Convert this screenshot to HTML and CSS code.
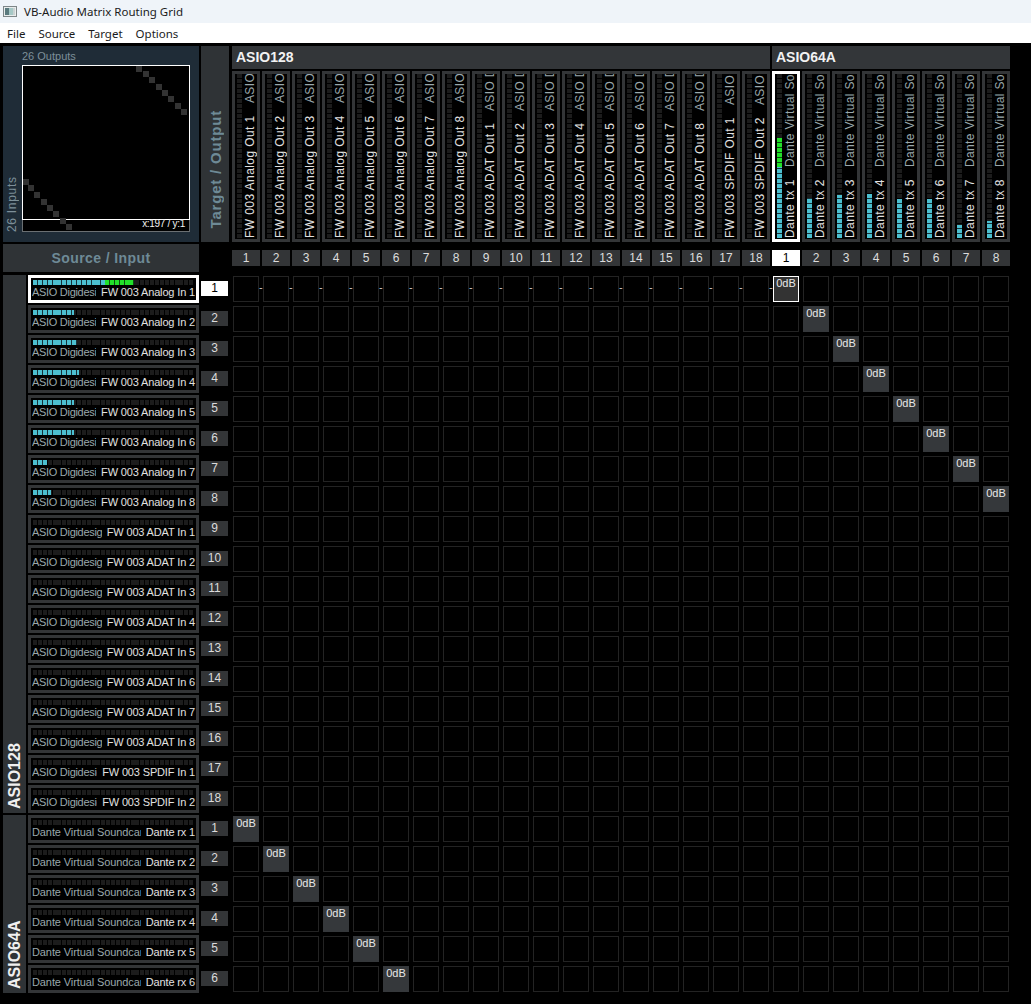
FILE: index.html
```html
<!DOCTYPE html>
<html lang="en">
<head>
<meta charset="utf-8">
<title>VB-Audio Matrix Routing Grid</title>
<link rel="stylesheet" href="styles.css">
</head>
<body>
<header class="titlebar">
<svg class="appicon" width="14" height="11" viewBox="0 0 14 11"><rect x="0.5" y="0.5" width="13" height="10" fill="#e8ecec" stroke="#7d8688"/><rect x="2" y="2" width="4" height="7" fill="#5a7a7e"/><rect x="6" y="2" width="4" height="7" fill="#a5c8c6"/><rect x="10" y="2" width="2" height="7" fill="#c9d2d2"/></svg>
<span>VB-Audio Matrix Routing Grid</span>
</header>
<nav class="menubar"><span>File</span><span>Source</span><span>Target</span><span>Options</span></nav>
<main class="app">
<section class="top">
<div class="overview">
<div class="ov-out">26 Outputs</div>
<div class="ov-in">26 Inputs</div>
<div class="ov-map">
<svg width="168" height="167" viewBox="0 0 168 167">
<rect x="0.5" y="0.5" width="167" height="166" fill="#000" stroke="#6a6f72"/>
<rect x="0.5" y="0.5" width="167" height="154" fill="none" stroke="#fff"/>
<g fill="#333">
<rect x="114" y="1" width="6" height="6"/><rect x="121" y="6" width="6" height="6"/><rect x="127" y="12" width="6" height="6"/><rect x="134" y="19" width="6" height="6"/><rect x="140" y="25" width="6" height="6"/><rect x="146" y="31" width="6" height="6"/><rect x="153" y="38" width="6" height="6"/><rect x="159" y="44" width="6" height="6"/>
<rect x="1" y="114" width="6" height="6"/><rect x="6" y="120" width="6" height="6"/><rect x="12" y="127" width="6" height="6"/><rect x="19" y="134" width="6" height="6"/><rect x="25" y="140" width="6" height="6"/><rect x="31" y="146" width="6" height="6"/><rect x="38" y="153" width="6" height="6"/><rect x="44" y="159" width="6" height="6"/>
</g>
</svg>
<span class="ov-pos">x:197 / y:1</span>
</div>
</div>
<div class="target-label"><span>Target / Output</span></div>
<div class="outputs">
<div class="group-head g128">ASIO128</div>
<div class="group-head g64">ASIO64A</div>
<div class="col"><div class="vm"></div><div class="vt"><span class="ch">FW 003 Analog Out 1</span><span class="src">ASIO Digidesign</span></div></div>
<div class="col"><div class="vm"></div><div class="vt"><span class="ch">FW 003 Analog Out 2</span><span class="src">ASIO Digidesign</span></div></div>
<div class="col"><div class="vm"></div><div class="vt"><span class="ch">FW 003 Analog Out 3</span><span class="src">ASIO Digidesign</span></div></div>
<div class="col"><div class="vm"></div><div class="vt"><span class="ch">FW 003 Analog Out 4</span><span class="src">ASIO Digidesign</span></div></div>
<div class="col"><div class="vm"></div><div class="vt"><span class="ch">FW 003 Analog Out 5</span><span class="src">ASIO Digidesign</span></div></div>
<div class="col"><div class="vm"></div><div class="vt"><span class="ch">FW 003 Analog Out 6</span><span class="src">ASIO Digidesign</span></div></div>
<div class="col"><div class="vm"></div><div class="vt"><span class="ch">FW 003 Analog Out 7</span><span class="src">ASIO Digidesign</span></div></div>
<div class="col"><div class="vm"></div><div class="vt"><span class="ch">FW 003 Analog Out 8</span><span class="src">ASIO Digidesign</span></div></div>
<div class="col"><div class="vm"></div><div class="vt"><span class="ch">FW 003 ADAT Out 1</span><span class="src">ASIO Digidesign</span></div></div>
<div class="col"><div class="vm"></div><div class="vt"><span class="ch">FW 003 ADAT Out 2</span><span class="src">ASIO Digidesign</span></div></div>
<div class="col"><div class="vm"></div><div class="vt"><span class="ch">FW 003 ADAT Out 3</span><span class="src">ASIO Digidesign</span></div></div>
<div class="col"><div class="vm"></div><div class="vt"><span class="ch">FW 003 ADAT Out 4</span><span class="src">ASIO Digidesign</span></div></div>
<div class="col"><div class="vm"></div><div class="vt"><span class="ch">FW 003 ADAT Out 5</span><span class="src">ASIO Digidesign</span></div></div>
<div class="col"><div class="vm"></div><div class="vt"><span class="ch">FW 003 ADAT Out 6</span><span class="src">ASIO Digidesign</span></div></div>
<div class="col"><div class="vm"></div><div class="vt"><span class="ch">FW 003 ADAT Out 7</span><span class="src">ASIO Digidesign</span></div></div>
<div class="col"><div class="vm"></div><div class="vt"><span class="ch">FW 003 ADAT Out 8</span><span class="src">ASIO Digidesign</span></div></div>
<div class="col"><div class="vm"></div><div class="vt"><span class="ch">FW 003 SPDIF Out 1</span><span class="src">ASIO Digidesign</span></div></div>
<div class="col"><div class="vm"></div><div class="vt"><span class="ch">FW 003 SPDIF Out 2</span><span class="src">ASIO Digidesign</span></div></div>
<div class="col sel"><div class="vm"><i class="c" style="height:71px"></i><i class="l" style="height:29px"></i></div><div class="vt"><span class="ch">Dante tx 1</span><span class="src">Dante Virtual Soundcard</span></div></div>
<div class="col"><div class="vm"><i class="c" style="height:40px"></i></div><div class="vt"><span class="ch">Dante tx 2</span><span class="src">Dante Virtual Soundcard</span></div></div>
<div class="col"><div class="vm"><i class="c" style="height:43px"></i></div><div class="vt"><span class="ch">Dante tx 3</span><span class="src">Dante Virtual Soundcard</span></div></div>
<div class="col"><div class="vm"><i class="c" style="height:44px"></i></div><div class="vt"><span class="ch">Dante tx 4</span><span class="src">Dante Virtual Soundcard</span></div></div>
<div class="col"><div class="vm"><i class="c" style="height:39px"></i></div><div class="vt"><span class="ch">Dante tx 5</span><span class="src">Dante Virtual Soundcard</span></div></div>
<div class="col"><div class="vm"><i class="c" style="height:39px"></i></div><div class="vt"><span class="ch">Dante tx 6</span><span class="src">Dante Virtual Soundcard</span></div></div>
<div class="col"><div class="vm"><i class="c" style="height:13px"></i></div><div class="vt"><span class="ch">Dante tx 7</span><span class="src">Dante Virtual Soundcard</span></div></div>
<div class="col"><div class="vm"><i class="c" style="height:17px"></i></div><div class="vt"><span class="ch">Dante tx 8</span><span class="src">Dante Virtual Soundcard</span></div></div>
</div>
</section>
<section class="mid">
<div class="source-label">Source / Input</div>
<div class="col-nums">
<span>1</span><span>2</span><span>3</span><span>4</span><span>5</span><span>6</span><span>7</span><span>8</span><span>9</span><span>10</span><span>11</span><span>12</span><span>13</span><span>14</span><span>15</span><span>16</span><span>17</span><span>18</span><span class="sel">1</span><span>2</span><span>3</span><span>4</span><span>5</span><span>6</span><span>7</span><span>8</span>
</div>
</section>
<section class="body">
<div class="groups">
<div class="g-a"><span>ASIO128</span></div>
<div class="g-b"><span>ASIO64A</span></div>
</div>
<div class="inputs">
<div class="row sel"><div class="hm"><i class="c" style="width:72px"></i><i class="l" style="width:29px"></i></div><div class="ht"><span class="src">ASIO Digidesign</span><span class="ch">FW 003 Analog In 1</span></div></div><span class="num sel">1</span>
<div class="row"><div class="hm"><i class="c" style="width:41px"></i></div><div class="ht"><span class="src">ASIO Digidesign</span><span class="ch">FW 003 Analog In 2</span></div></div><span class="num">2</span>
<div class="row"><div class="hm"><i class="c" style="width:44px"></i></div><div class="ht"><span class="src">ASIO Digidesign</span><span class="ch">FW 003 Analog In 3</span></div></div><span class="num">3</span>
<div class="row"><div class="hm"><i class="c" style="width:46px"></i></div><div class="ht"><span class="src">ASIO Digidesign</span><span class="ch">FW 003 Analog In 4</span></div></div><span class="num">4</span>
<div class="row"><div class="hm"><i class="c" style="width:41px"></i></div><div class="ht"><span class="src">ASIO Digidesign</span><span class="ch">FW 003 Analog In 5</span></div></div><span class="num">5</span>
<div class="row"><div class="hm"><i class="c" style="width:41px"></i></div><div class="ht"><span class="src">ASIO Digidesign</span><span class="ch">FW 003 Analog In 6</span></div></div><span class="num">6</span>
<div class="row"><div class="hm"><i class="c" style="width:14px"></i></div><div class="ht"><span class="src">ASIO Digidesign</span><span class="ch">FW 003 Analog In 7</span></div></div><span class="num">7</span>
<div class="row"><div class="hm"><i class="c" style="width:18px"></i></div><div class="ht"><span class="src">ASIO Digidesign</span><span class="ch">FW 003 Analog In 8</span></div></div><span class="num">8</span>
<div class="row"><div class="hm"></div><div class="ht"><span class="src">ASIO Digidesign</span><span class="ch">FW 003 ADAT In 1</span></div></div><span class="num">9</span>
<div class="row"><div class="hm"></div><div class="ht"><span class="src">ASIO Digidesign</span><span class="ch">FW 003 ADAT In 2</span></div></div><span class="num">10</span>
<div class="row"><div class="hm"></div><div class="ht"><span class="src">ASIO Digidesign</span><span class="ch">FW 003 ADAT In 3</span></div></div><span class="num">11</span>
<div class="row"><div class="hm"></div><div class="ht"><span class="src">ASIO Digidesign</span><span class="ch">FW 003 ADAT In 4</span></div></div><span class="num">12</span>
<div class="row"><div class="hm"></div><div class="ht"><span class="src">ASIO Digidesign</span><span class="ch">FW 003 ADAT In 5</span></div></div><span class="num">13</span>
<div class="row"><div class="hm"></div><div class="ht"><span class="src">ASIO Digidesign</span><span class="ch">FW 003 ADAT In 6</span></div></div><span class="num">14</span>
<div class="row"><div class="hm"></div><div class="ht"><span class="src">ASIO Digidesign</span><span class="ch">FW 003 ADAT In 7</span></div></div><span class="num">15</span>
<div class="row"><div class="hm"></div><div class="ht"><span class="src">ASIO Digidesign</span><span class="ch">FW 003 ADAT In 8</span></div></div><span class="num">16</span>
<div class="row"><div class="hm"></div><div class="ht"><span class="src">ASIO Digidesign</span><span class="ch">FW 003 SPDIF In 1</span></div></div><span class="num">17</span>
<div class="row"><div class="hm"></div><div class="ht"><span class="src">ASIO Digidesign</span><span class="ch">FW 003 SPDIF In 2</span></div></div><span class="num">18</span>
<div class="row"><div class="hm"></div><div class="ht"><span class="src dv">Dante Virtual Soundcard</span><span class="ch">Dante rx 1</span></div></div><span class="num">1</span>
<div class="row"><div class="hm"></div><div class="ht"><span class="src dv">Dante Virtual Soundcard</span><span class="ch">Dante rx 2</span></div></div><span class="num">2</span>
<div class="row"><div class="hm"></div><div class="ht"><span class="src dv">Dante Virtual Soundcard</span><span class="ch">Dante rx 3</span></div></div><span class="num">3</span>
<div class="row"><div class="hm"></div><div class="ht"><span class="src dv">Dante Virtual Soundcard</span><span class="ch">Dante rx 4</span></div></div><span class="num">4</span>
<div class="row"><div class="hm"></div><div class="ht"><span class="src dv">Dante Virtual Soundcard</span><span class="ch">Dante rx 5</span></div></div><span class="num">5</span>
<div class="row"><div class="hm"></div><div class="ht"><span class="src dv">Dante Virtual Soundcard</span><span class="ch">Dante rx 6</span></div></div><span class="num">6</span>
</div>
<div class="matrix">
<i class="d"><u>-</u></i><i class="d"><u>-</u></i><i class="d"><u>-</u></i><i class="d"><u>-</u></i><i class="d"><u>-</u></i><i class="d"><u>-</u></i><i class="d"><u>-</u></i><i class="d"><u>-</u></i><i class="d"><u>-</u></i><i class="d"><u>-</u></i><i class="d"><u>-</u></i><i class="d"><u>-</u></i><i class="d"><u>-</u></i><i class="d"><u>-</u></i><i class="d"><u>-</u></i><i class="d"><u>-</u></i><i class="d"><u>-</u></i><i class="d"><u>-</u></i><b class="sel">0dB</b><i></i><i></i><i></i><i></i><i></i><i></i><i></i>
<i></i><i></i><i></i><i></i><i></i><i></i><i></i><i></i><i></i><i></i><i></i><i></i><i></i><i></i><i></i><i></i><i></i><i></i><i></i><b>0dB</b><i></i><i></i><i></i><i></i><i></i><i></i>
<i></i><i></i><i></i><i></i><i></i><i></i><i></i><i></i><i></i><i></i><i></i><i></i><i></i><i></i><i></i><i></i><i></i><i></i><i></i><i></i><b>0dB</b><i></i><i></i><i></i><i></i><i></i>
<i></i><i></i><i></i><i></i><i></i><i></i><i></i><i></i><i></i><i></i><i></i><i></i><i></i><i></i><i></i><i></i><i></i><i></i><i></i><i></i><i></i><b>0dB</b><i></i><i></i><i></i><i></i>
<i></i><i></i><i></i><i></i><i></i><i></i><i></i><i></i><i></i><i></i><i></i><i></i><i></i><i></i><i></i><i></i><i></i><i></i><i></i><i></i><i></i><i></i><b>0dB</b><i></i><i></i><i></i>
<i></i><i></i><i></i><i></i><i></i><i></i><i></i><i></i><i></i><i></i><i></i><i></i><i></i><i></i><i></i><i></i><i></i><i></i><i></i><i></i><i></i><i></i><i></i><b>0dB</b><i></i><i></i>
<i></i><i></i><i></i><i></i><i></i><i></i><i></i><i></i><i></i><i></i><i></i><i></i><i></i><i></i><i></i><i></i><i></i><i></i><i></i><i></i><i></i><i></i><i></i><i></i><b>0dB</b><i></i>
<i></i><i></i><i></i><i></i><i></i><i></i><i></i><i></i><i></i><i></i><i></i><i></i><i></i><i></i><i></i><i></i><i></i><i></i><i></i><i></i><i></i><i></i><i></i><i></i><i></i><b>0dB</b>
<i></i><i></i><i></i><i></i><i></i><i></i><i></i><i></i><i></i><i></i><i></i><i></i><i></i><i></i><i></i><i></i><i></i><i></i><i></i><i></i><i></i><i></i><i></i><i></i><i></i><i></i>
<i></i><i></i><i></i><i></i><i></i><i></i><i></i><i></i><i></i><i></i><i></i><i></i><i></i><i></i><i></i><i></i><i></i><i></i><i></i><i></i><i></i><i></i><i></i><i></i><i></i><i></i>
<i></i><i></i><i></i><i></i><i></i><i></i><i></i><i></i><i></i><i></i><i></i><i></i><i></i><i></i><i></i><i></i><i></i><i></i><i></i><i></i><i></i><i></i><i></i><i></i><i></i><i></i>
<i></i><i></i><i></i><i></i><i></i><i></i><i></i><i></i><i></i><i></i><i></i><i></i><i></i><i></i><i></i><i></i><i></i><i></i><i></i><i></i><i></i><i></i><i></i><i></i><i></i><i></i>
<i></i><i></i><i></i><i></i><i></i><i></i><i></i><i></i><i></i><i></i><i></i><i></i><i></i><i></i><i></i><i></i><i></i><i></i><i></i><i></i><i></i><i></i><i></i><i></i><i></i><i></i>
<i></i><i></i><i></i><i></i><i></i><i></i><i></i><i></i><i></i><i></i><i></i><i></i><i></i><i></i><i></i><i></i><i></i><i></i><i></i><i></i><i></i><i></i><i></i><i></i><i></i><i></i>
<i></i><i></i><i></i><i></i><i></i><i></i><i></i><i></i><i></i><i></i><i></i><i></i><i></i><i></i><i></i><i></i><i></i><i></i><i></i><i></i><i></i><i></i><i></i><i></i><i></i><i></i>
<i></i><i></i><i></i><i></i><i></i><i></i><i></i><i></i><i></i><i></i><i></i><i></i><i></i><i></i><i></i><i></i><i></i><i></i><i></i><i></i><i></i><i></i><i></i><i></i><i></i><i></i>
<i></i><i></i><i></i><i></i><i></i><i></i><i></i><i></i><i></i><i></i><i></i><i></i><i></i><i></i><i></i><i></i><i></i><i></i><i></i><i></i><i></i><i></i><i></i><i></i><i></i><i></i>
<i></i><i></i><i></i><i></i><i></i><i></i><i></i><i></i><i></i><i></i><i></i><i></i><i></i><i></i><i></i><i></i><i></i><i></i><i></i><i></i><i></i><i></i><i></i><i></i><i></i><i></i>
<b>0dB</b><i></i><i></i><i></i><i></i><i></i><i></i><i></i><i></i><i></i><i></i><i></i><i></i><i></i><i></i><i></i><i></i><i></i><i></i><i></i><i></i><i></i><i></i><i></i><i></i><i></i>
<i></i><b>0dB</b><i></i><i></i><i></i><i></i><i></i><i></i><i></i><i></i><i></i><i></i><i></i><i></i><i></i><i></i><i></i><i></i><i></i><i></i><i></i><i></i><i></i><i></i><i></i><i></i>
<i></i><i></i><b>0dB</b><i></i><i></i><i></i><i></i><i></i><i></i><i></i><i></i><i></i><i></i><i></i><i></i><i></i><i></i><i></i><i></i><i></i><i></i><i></i><i></i><i></i><i></i><i></i>
<i></i><i></i><i></i><b>0dB</b><i></i><i></i><i></i><i></i><i></i><i></i><i></i><i></i><i></i><i></i><i></i><i></i><i></i><i></i><i></i><i></i><i></i><i></i><i></i><i></i><i></i><i></i>
<i></i><i></i><i></i><i></i><b>0dB</b><i></i><i></i><i></i><i></i><i></i><i></i><i></i><i></i><i></i><i></i><i></i><i></i><i></i><i></i><i></i><i></i><i></i><i></i><i></i><i></i><i></i>
<i></i><i></i><i></i><i></i><i></i><b>0dB</b><i></i><i></i><i></i><i></i><i></i><i></i><i></i><i></i><i></i><i></i><i></i><i></i><i></i><i></i><i></i><i></i><i></i><i></i><i></i><i></i>
</div>
</section>
</main>
</body>
</html>
```
FILE: styles.css
```css
* { box-sizing: border-box; }
html, body { margin: 0; height: 100%; }
body {
  background: #000;
  color: #fff;
  font-family: "Liberation Sans", Arial, sans-serif;
  overflow: hidden;
}

.titlebar {
  height: 23px;
  background: #eff4f9;
  color: #1b1b1b;
  font: 11.5px "Noto Sans", "Open Sans", sans-serif;
  display: flex;
  align-items: center;
  gap: 7px;
  padding-left: 3px;
}
.appicon { flex: none; }
.menubar {
  height: 20px;
  background: #fff;
  color: #1b1b1b;
  font: 11.5px "Noto Sans", "Open Sans", sans-serif;
  display: flex;
  align-items: center;
  gap: 13px;
  padding-left: 7px;
}

.app { padding: 3px 0 0 3px; }

/* top band */
.top { display: flex; height: 196px; }
.overview {
  width: 196px;
  background: #1f2c37;
  display: grid;
  grid-template-columns: 19px 168px;
  grid-template-rows: 19px 167px;
  color: #7d8f99;
  font-size: 11px;
}
.ov-out { grid-column: 2; line-height: 21px; }
.ov-in {
  grid-column: 1;
  grid-row: 2;
  writing-mode: vertical-rl;
  transform: rotate(180deg);
  font-size: 12px;
  line-height: 19px;
  letter-spacing: .7px;
}
.ov-map { grid-column: 2; grid-row: 2; position: relative; }
.ov-map svg { display: block; }
.ov-pos {
  position: absolute;
  right: 5px;
  bottom: 2px;
  font-size: 10px;
  letter-spacing: -.3px;
  line-height: 12px;
  color: #f2f2f2;
}
.target-label {
  width: 28px;
  margin-left: 2px;
  background: #2f3336;
  display: flex;
  justify-content: center;
  align-items: flex-end;
  padding-bottom: 14px;
}
.target-label span {
  writing-mode: vertical-rl;
  transform: rotate(180deg);
  font-size: 15px;
  font-weight: 700;
  letter-spacing: .8px;
  color: #6e8a96;
  white-space: nowrap;
}
.outputs {
  margin-left: 3px;
  display: grid;
  grid-template-columns: repeat(26, 28px);
  grid-template-rows: 23px 171px;
  gap: 2px;
}
.group-head {
  background: #333639;
  font-size: 14px;
  font-weight: 700;
  line-height: 23px;
  padding-left: 4px;
  color: #f2f2f2;
}
.g128 { grid-column: 1 / span 18; }
.g64 { grid-column: 19 / span 8; }

.col {
  background: #333537;
  padding: 3px;
  display: flex;
}
.col.sel { background: #fff; }
.vm, .hm { background-color: #000; display: flex; }
.vm {
  flex: none;
  width: 8px;
  border: solid #000;
  border-width: 0 1px 1px 2px;
  flex-direction: column-reverse;
  background-clip: content-box;
  background-image: repeating-linear-gradient(to top, #1c1c1c 0 4px, #000 4px 5px);
}
.vm i { display: block; flex: none; background: repeating-linear-gradient(to top, #4cbfd0 0 4px, #16323a 4px 5px); }
.vm .l { background: repeating-linear-gradient(to top, #22e02a 0 4px, #0f4a12 4px 5px); }
.vt {
  flex: 1;
  min-width: 0;
  background: #000;
  writing-mode: vertical-rl;
  transform: rotate(180deg);
  display: flex;
  gap: 12px;
  overflow: hidden;
  font-size: 12px;
  letter-spacing: .42px;
  line-height: 14px;
  white-space: nowrap;
  padding-top: 1px;
  align-items: center;
}
.src { color: #9aa8ac; }
.ch { color: #e2e2e2; flex: none; }
.vt .src, .ht .src { flex: 1; min-width: 0; min-height: 0; overflow: hidden; }
.vt .src { letter-spacing: .35px; }

/* number band */
.mid { display: flex; height: 28px; margin-top: 2px; }
.source-label {
  width: 196px;
  background: #2f3336;
  color: #6e8a96;
  font-size: 14px;
  font-weight: 700;
  letter-spacing: .4px;
  line-height: 28px;
  text-align: center;
}
.col-nums {
  margin-left: 33px;
  padding-top: 6px;
  display: grid;
  grid-template-columns: repeat(26, 28px);
  gap: 2px;
  align-items: start;
}
.col-nums span, .num {
  height: 16px;
  background: #333537;
  color: #dcdcdc;
  font-size: 12px;
  line-height: 16px;
  text-align: center;
}
.num { height: 15px; line-height: 15px; }
.col-nums .sel, .num.sel { background: #fff; color: #000; }

/* body */
.body { display: flex; margin-top: 3px; }
.groups { width: 23px; display: flex; flex-direction: column; gap: 2px; }
.g-a, .g-b {
  background: #2f3336;
  display: flex;
  justify-content: center;
}
.g-a { height: 538px; }
.g-b { height: 178px; }
.groups span {
  writing-mode: vertical-rl;
  transform: rotate(180deg);
  font-size: 16px;
  font-weight: 700;
  color: #f0f0f0;
  white-space: nowrap;
  padding-top: 4px;
}
.inputs {
  margin-left: 2px;
  display: grid;
  grid-template-columns: 171px 27px;
  grid-auto-rows: 28px;
  gap: 2px;
  align-items: start;
}
.row {
  height: 28px;
  background: #333537;
  padding: 3px;
}
.row.sel { background: #fff; }
.hm {
  height: 7px;
  border: solid #000;
  border-width: 2px 2px 0 2px;
  background-clip: content-box;
  background-image: repeating-linear-gradient(to right, #1c1c1c 0 4px, #000 4px 4.88px);
}
.hm i { display: block; flex: none; background: repeating-linear-gradient(to right, #4cbfd0 0 4px, #16323a 4px 4.88px); }
.hm .l { background: repeating-linear-gradient(to right, #22e02a 0 4px, #0f4a12 4px 4.88px); }
.ht {
  height: 15px;
  background: #000;
  display: flex;
  gap: 5px;
  padding: 0 1px;
  font-size: 11px;
  letter-spacing: -.15px;
  line-height: 14px;
  white-space: nowrap;
  overflow: hidden;
}
.ht .src { letter-spacing: -.3px; }
.ht .src.dv { letter-spacing: -.1px; }
.num { margin-top: 6px; }

.matrix {
  margin: 1px 0 0 5px;
  display: grid;
  grid-template-columns: repeat(26, 26px);
  grid-auto-rows: 26px;
  gap: 4px;
}
.matrix i, .matrix b {
  display: block;
  position: relative;
  border: 1px solid #232323;
  font-style: normal;
}
.matrix b {
  background: #35383b;
  border-color: #35383b;
  color: #e8e8e8;
  font-size: 11px;
  font-weight: 400;
  line-height: 13px;
  text-align: center;
}
.matrix b.sel { border-color: #fff; background: #333; }
.matrix u {
  position: absolute;
  left: 25px;
  top: 4px;
  font-size: 11px;
  line-height: 13px;
  color: #ccc;
  text-decoration: none;
}
```
